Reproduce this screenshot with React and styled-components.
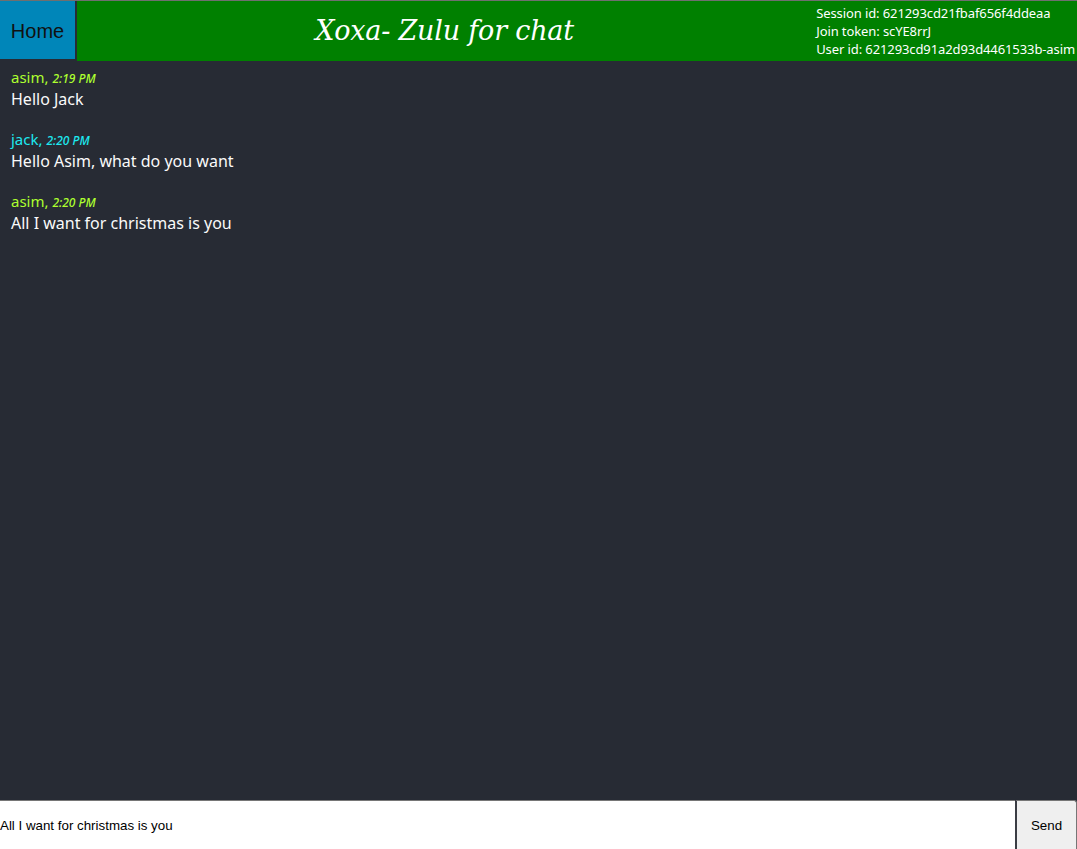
import React from 'react'
import styled, { createGlobalStyle } from 'styled-components'

const Global = createGlobalStyle`
  html, body { margin: 0; padding: 0; height: 100%; }
  body { background: #272b34; }
  #root { height: 100%; }
`

const Page = styled.div`
  height: 849px;
  display: flex;
  flex-direction: column;
  background: #272b34;
`

const Header = styled.header`
  height: 61px;
  display: flex;
  align-items: stretch;
  background: #008000;
  border-top: 1px solid #6f6f6f;
  box-sizing: border-box;
  flex-shrink: 0;
`

const HomeBtn = styled.button`
  width: 77px;
  margin: 0;
  padding: 3px 0 0;
  background: #0086b9;
  color: #111;
  border: none;
  border-right: 2px solid #272b34;
  border-bottom: 2px solid #272b34;
  font-family: "Liberation Sans", Arial, sans-serif;
  font-size: 20px;
  cursor: pointer;
`

const Title = styled.h1`
  flex: 1;
  margin: 0;
  display: flex;
  align-items: center;
  justify-content: center;
  padding-bottom: 2px;
  color: #fff;
  font-family: "DejaVu Serif", Georgia, serif;
  font-style: italic;
  font-weight: normal;
  font-size: 27px;
  letter-spacing: -0.2px;
`

const Info = styled.div`
  padding: 3px 2px 0 4px;
  color: #fff;
  font-family: "Noto Sans", "Open Sans", sans-serif;
  font-size: 13px;
  line-height: 18px;
  white-space: nowrap;
  letter-spacing: -0.1px;
`

const Chat = styled.main`
  flex: 1;
  padding: 7px 11px;
  overflow: auto;
`

const Message = styled.div`
  margin-bottom: 20px;
  font-family: "Noto Sans", "Open Sans", sans-serif;
`

const Author = styled.div`
  color: ${p => p.color};
  font-size: 15px;
  line-height: 19px;
`

const Time = styled.i`
  font-size: 12px;
  font-weight: 500;
`

const Text = styled.div`
  color: #fafafa;
  font-size: 16px;
  line-height: 22px;
`

const Footer = styled.form`
  height: 49px;
  display: flex;
  margin: 0;
  flex-shrink: 0;
`

const Input = styled.input`
  flex: 1;
  margin: 0;
  padding: 0;
  border: none;
  border-top: 1px solid #767676;
  outline: none;
  background: #fff;
  font-family: "Liberation Sans", Arial, sans-serif;
  font-size: 13.33px;
  color: #000;
`

const SendBtn = styled.button`
  width: 62px;
  margin: 0;
  background: #efefef;
  border: 1px solid #767676;
  border-left: 2px solid #3a3d44;
  border-bottom: none;
  border-radius: 0 3px 0 0;
  font-family: "Liberation Sans", Arial, sans-serif;
  font-size: 13.33px;
  color: #000;
`

const messages = [
  { id: 1, user: 'asim', time: '2:19 PM', text: 'Hello Jack', color: '#adff2f' },
  { id: 2, user: 'jack', time: '2:20 PM', text: 'Hello Asim, what do you want', color: '#1de9f0' },
  { id: 3, user: 'asim', time: '2:20 PM', text: 'All I want for christmas is you', color: '#adff2f' },
]

export default function App() {
  return (
    <>
      <Global />
      <Page>
        <Header>
          <HomeBtn>Home</HomeBtn>
          <Title>Xoxa- Zulu for chat</Title>
          <Info>
            <div>Session id: 621293cd21fbaf656f4ddeaa</div>
            <div>Join token: scYE8rrJ</div>
            <div>User id: 621293cd91a2d93d4461533b-asim</div>
          </Info>
        </Header>
        <Chat>
          {messages.map(m => (
            <Message key={m.id}>
              <Author color={m.color}>
                {m.user}, <Time>{m.time}</Time>
              </Author>
              <Text>{m.text}</Text>
            </Message>
          ))}
        </Chat>
        <Footer onSubmit={e => e.preventDefault()}>
          <Input defaultValue="All I want for christmas is you" />
          <SendBtn type="submit">Send</SendBtn>
        </Footer>
      </Page>
    </>
  )
}
